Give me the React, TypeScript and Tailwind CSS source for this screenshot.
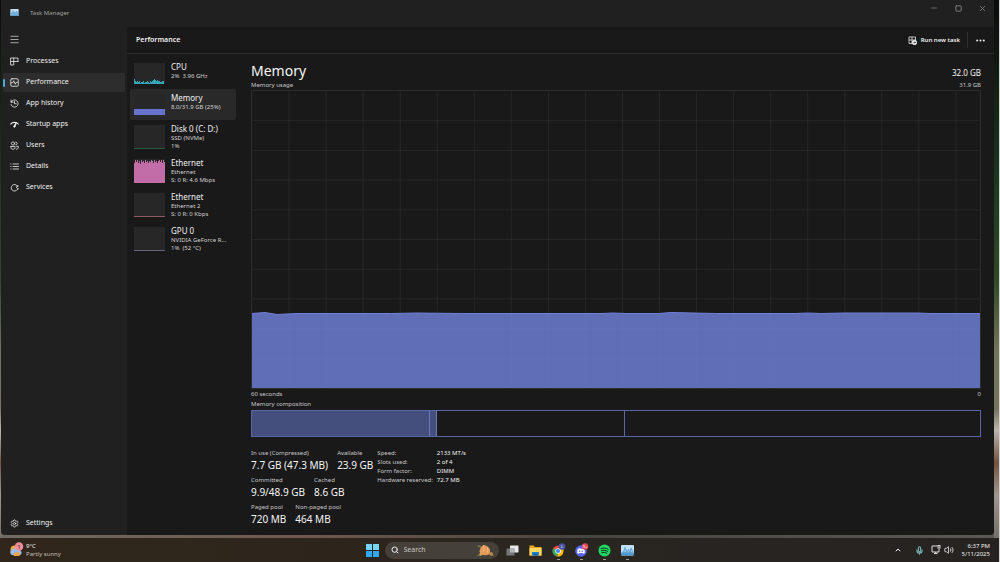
import React from "react";
import { ChevronUp, Menu, Mic, Minus, Search, Settings, Square, Volume2, X } from "lucide-react";

const GRID_COLUMNS = Array.from({ length: 19 }, (_, i) => (i + 1) * 37.15);
const GRID_ROWS = Array.from({ length: 9 }, (_, i) => (i + 1) * 29.9);

const USAGE_LINE =
  "M0 224 L13 223 L25 225 L45 224 L140 224 L165 223.5 L210 224 L350 224 L362 223.5 L375 224 L408 224 L420 223 L465 224 L545 224 L557 223.5 L570 224 L595 223.5 L668 223.5 L680 224 L730 224";

const NavIcon = ({ children }: { children: React.ReactNode }) => (
  <svg
    viewBox="0 0 18 18"
    className="size-[9px] shrink-0"
    fill="none"
    stroke="currentColor"
    strokeWidth="1.6"
    strokeLinecap="round"
    strokeLinejoin="round"
  >
    {children}
  </svg>
);

const navItems = [
  {
    label: "Processes",
    icon: <path d="M2 2h5.500v14H2zM2 9h14M7.500 2H16v7" />,
  },
  {
    label: "Performance",
    active: true,
    icon: (
      <>
        <rect x="1.500" y="1.500" width="15" height="15" rx="2.500" />
        <path d="M3 9.500h2.500l2-4 3 7 2-4h2.500" />
      </>
    ),
  },
  {
    label: "App history",
    icon: (
      <>
        <path d="M2 2v4.500h4.500M2.300 6.300A7.200 7.200 0 1 1 2 11" />
        <path d="M9 5v4.500h3.500" />
      </>
    ),
  },
  {
    label: "Startup apps",
    icon: (
      <>
        <path d="M1.500 8C5 3.500 13 3.500 16.500 8" strokeWidth="2.400" />
        <path d="M12.500 5 7.500 12.500a1.500 1.500 0 0 0 2.800 1.200z" fill="currentColor" />
      </>
    ),
  },
  {
    label: "Users",
    icon: (
      <>
        <circle cx="6" cy="5" r="3.200" />
        <path d="M1.500 11h8.500v2.500c0 4-8.500 4-8.500 0z" />
        <path d="M11.500 2.200a2.800 2.800 0 1 1 0 5.600M13 10.800h3.500v2.500c0 2-1.500 3-4 3" />
      </>
    ),
  },
  {
    label: "Details",
    icon: <path d="M6 4h11M6 9h11M6 14h11M1.500 4h.5M1.500 9h.5M1.500 14h.5" />,
  },
  {
    label: "Services",
    icon: (
      <path d="M14.500 6a6.500 6.500 0 1 0 0 7c1.500.5 2.500-.5 2-2l-2.500-.5a2 2 0 0 1 0-3.500l2.500-.5c0-1.500-1-2-2-.5z" />
    ),
  },
];

const CPU_BARS = [5, 3, 2, 3, 2, 3, 1, 2, 2, 3, 1, 2, 2, 3, 2, 1, 3, 2, 3, 4, 5, 4, 3, 4, 3, 3, 2, 2, 3, 3];
const NET_BARS = [20, 23, 21, 23, 20, 22, 19, 23, 21, 22, 20, 23, 21, 22, 20, 22, 21, 23, 22, 20, 23, 21, 22, 20, 22, 23, 21, 23, 20, 23, 21];

const Bars = ({ data, height }: { data: number[]; height: number }) => (
  <>
    {data.map((value, i) => (
      <rect key={i} x={i} y={height - value} width="1" height={value} />
    ))}
  </>
);

const resources = [
  {
    name: "CPU",
    lines: ["2%  3.96 GHz"],
    chart: (
      <g fill="#35a5b8">
        <Bars data={CPU_BARS} height={21} />
      </g>
    ),
  },
  {
    name: "Memory",
    lines: ["8.0/31.9 GB (25%)"],
    active: true,
    chart: <rect y="15" width="31" height="6" fill="#6673cc" />,
  },
  {
    name: "Disk 0 (C: D:)",
    lines: ["SSD (NVMe)", "1%"],
    chart: <rect y="23" width="31" height="1" fill="#28583c" />,
  },
  {
    name: "Ethernet",
    lines: ["Ethernet", "S: 0 R: 4.6 Mbps"],
    chart: (
      <g fill="#c26da8">
        <Bars data={NET_BARS} height={24} />
      </g>
    ),
  },
  {
    name: "Ethernet",
    lines: ["Ethernet 2", "S: 0 R: 0 Kbps"],
    chart: <rect y="23" width="31" height="1" fill="#8d5a66" />,
  },
  {
    name: "GPU 0",
    lines: ["NVIDIA GeForce R...", "1%  (52 °C)"],
    chart: <rect y="23" width="31" height="1" fill="#66647c" />,
  },
];

const stats = [
  [
    { label: "In use (Compressed)", value: "7.7 GB (47.3 MB)" },
    { label: "Available", value: "23.9 GB" },
  ],
  [
    { label: "Committed", value: "9.9/48.9 GB" },
    { label: "Cached", value: "8.6 GB" },
  ],
  [
    { label: "Paged pool", value: "720 MB" },
    { label: "Non-paged pool", value: "464 MB" },
  ],
];

const hardware = [
  ["Speed:", "2133 MT/s"],
  ["Slots used:", "2 of 4"],
  ["Form factor:", "DIMM"],
  ["Hardware reserved:", "72.7 MB"],
];

const TaskManagerIcon = ({ className }: { className: string }) => (
  <svg viewBox="0 0 26 22" className={className}>
    <rect width="26" height="22" rx="2" fill="#c3def2" />
    <rect y="17" width="26" height="5" rx="1" fill="#5b9fd2" />
    <path d="M2 14h3l3-9 4 9 3-5 3 5 2-8 4 8v2H2z" fill="#77b8e6" stroke="#4c97cf" strokeWidth="1.500" />
  </svg>
);

const TitleBar = () => (
  <header className="flex h-[27px] shrink-0 items-start pl-[9px]">
    <div className="flex h-[27px] flex-1 items-center gap-[11px] text-[6px] text-[#a0a0a0]">
      <TaskManagerIcon className="mb-[2px] h-[7px] w-[9px]" />
      Task Manager
    </div>
    <div className="flex text-[#888888]">
      <button aria-label="Minimize" className="flex h-4 w-6 items-center justify-center">
        <Minus className="size-2" strokeWidth={2} />
      </button>
      <button aria-label="Maximize" className="flex h-4 w-6 items-center justify-center">
        <Square className="size-[7px]" strokeWidth={3} />
      </button>
      <button aria-label="Close" className="flex h-4 w-6 items-center justify-center">
        <X className="size-[9px]" strokeWidth={2} />
      </button>
    </div>
  </header>
);

const Sidebar = () => (
  <nav className="flex w-[126px] shrink-0 flex-col px-[2px] text-[7px] text-[#f0f0f0]">
    <button aria-label="Menu" className="flex h-[25px] items-center pl-[6px] text-[#b0b0b0]">
      <Menu className="size-[11px]" strokeWidth={2} />
    </button>
    <ul className="flex flex-col gap-[2px]">
      {navItems.map((item) => (
        <li key={item.label}>
          <button
            className={`flex h-[19px] w-full items-center rounded-[2px] ${item.active ? "bg-[#2d2d2d]" : ""}`}
          >
            <span className={`h-2 w-[2px] shrink-0 rounded-[1px] ${item.active ? "bg-[#4aa8dc]" : ""}`} />
            <span className="flex items-center gap-[7px] pl-[5px]">
              <NavIcon>{item.icon}</NavIcon>
              {item.label}
            </span>
          </button>
        </li>
      ))}
    </ul>
    <button className="mb-[2px] mt-auto flex h-[19px] items-center gap-[7px] pl-[7px]">
      <Settings className="size-[9px]" strokeWidth={2} />
      Settings
    </button>
  </nav>
);

const ResourceList = () => (
  <ul className="w-[109px] shrink-0 pl-[3px] pt-1">
    {resources.map((item, i) => (
      <li key={i}>
        <button
          className={`flex w-full items-start gap-[6px] rounded-[2px] pl-1 pt-1 text-left ${
            item.lines.length > 1 ? "h-[34px]" : "h-[31px]"
          } ${item.active ? "bg-[#292929]" : ""}`}
        >
          <svg
            viewBox={item.lines.length > 1 ? "0 0 31 24" : "0 0 31 21"}
            shapeRendering="crispEdges"
            className={`mt-px w-[31px] shrink-0 bg-[#272727] ${item.lines.length > 1 ? "h-6" : "h-[21px]"}`}
          >
            {item.chart}
          </svg>
          <span className="flex flex-col whitespace-pre text-[6px] leading-[8px] text-[#d0d0d0]">
            <span className="text-[8px] leading-[10px] text-[#f0f0f0]">{item.name}</span>
            {item.lines.map((line) => (
              <span key={line}>{line}</span>
            ))}
          </span>
        </button>
      </li>
    ))}
  </ul>
);

const UsageGraph = () => (
  <svg
    viewBox="0 0 730 299"
    preserveAspectRatio="none"
    className="min-h-[120px] w-full flex-[1_1_0px] border border-[#2c2c2c] bg-[#191919]"
    role="img"
    aria-label="Memory usage"
  >
    <path d={`${USAGE_LINE} V299 H0 Z`} fill="#5f6eb7" />
    <g stroke="#ffffff" strokeOpacity="0.06">
      {GRID_COLUMNS.map((x) => (
        <path key={x} d={`M${x} 0V224`} vectorEffect="non-scaling-stroke" />
      ))}
      {GRID_ROWS.map((y) => (
        <path key={y} d={`M0 ${y}H730`} strokeOpacity={y > 224 ? 0.02 : 0.06} vectorEffect="non-scaling-stroke" />
      ))}
      {GRID_COLUMNS.map((x) => (
        <path key={x} d={`M${x} 224V299`} strokeOpacity="0.02" vectorEffect="non-scaling-stroke" />
      ))}
    </g>
    <path d={USAGE_LINE} fill="none" stroke="#7180d8" vectorEffect="non-scaling-stroke" />
  </svg>
);

const MemoryPanel = () => (
  <section className="flex min-w-0 flex-1 flex-col pb-2 pl-[15px] pr-[13px] pt-[6px] text-[6px] leading-[9px] text-[#c8c8c8]">
    <div className="flex h-[21px] shrink-0 items-center justify-between text-[#f5f5f5]">
      <h1 className="text-[14px] leading-[21px]">Memory</h1>
      <span className="pt-[3px] text-[8px]">32.0 GB</span>
    </div>
    <div className="flex h-[9px] shrink-0 justify-between">
      <span>Memory usage</span>
      <span>31.9 GB</span>
    </div>
    <UsageGraph />
    <div className="flex h-[10px] shrink-0 items-center justify-between">
      <span>60 seconds</span>
      <span>0</span>
    </div>
    <div className="h-[11px] shrink-0 leading-[10px]">Memory composition</div>
    <div className="flex h-[27px] shrink-0 border border-[#5b66a8]">
      <div className="w-[24.4%] border-r border-[#6d78bc] bg-[#454f7d]" />
      <div className="w-[1%] border-r border-[#6d78bc] bg-[#454f7d]" />
      <div className="w-[25.9%] border-r border-[#5b66a8]" />
    </div>

    <div className="flex shrink-0 gap-1 pt-3">
      <div className="flex flex-col gap-[3px]">
        {stats.map((row) => (
          <dl key={row[0].label} className="flex gap-[9px]">
            {row.map((stat) => (
              <div key={stat.label}>
                <dt>{stat.label}</dt>
                <dd className="text-[10px] leading-[15px] text-[#f5f5f5]">{stat.value}</dd>
              </div>
            ))}
          </dl>
        ))}
      </div>
      <table className="self-start text-left">
        <tbody>
          {hardware.map(([label, value]) => (
            <tr key={label}>
              <th scope="row" className="p-0 pr-1 font-normal">
                {label}
              </th>
              <td className="p-0 text-[#f0f0f0]">{value}</td>
            </tr>
          ))}
        </tbody>
      </table>
    </div>
  </section>
);

const PerformanceHeader = () => (
  <div className="flex h-[27px] shrink-0 items-center border-b border-[#2b2b2b] px-[9px] text-[#f0f0f0]">
    <h2 className="flex-1 text-[7px] font-semibold">Performance</h2>
    <button className="flex items-center gap-1 pr-[7px] text-[6px] font-semibold">
      <svg viewBox="0 0 18 18" className="size-[9px]" fill="none" stroke="currentColor" strokeWidth="1.500">
        <path d="M8 15H2V2h13v6M2 8h13M8 2v13" />
        <circle cx="13" cy="13" r="4.500" fill="#f0f0f0" />
        <path d="M11 13h4M13.500 11.500 15 13l-1.500 1.500" stroke="#191919" />
      </svg>
      Run new task
    </button>
    <span className="h-4 w-px bg-[#303030]" />
    <button aria-label="More options" className="pl-2">
      <svg viewBox="0 0 9 3" className="h-[3px] w-[9px]" fill="currentColor">
        <circle cx="1.200" cy="1.500" r="1" />
        <circle cx="4.500" cy="1.500" r="1" />
        <circle cx="7.800" cy="1.500" r="1" />
      </svg>
    </button>
  </div>
);

const WeatherIcon = () => (
  <svg viewBox="0 0 30 32" className="h-4 w-[15px]">
    <circle cx="11" cy="15" r="8" fill="#f5a936" />
    <path d="M6 26a6 6 0 0 1 0-11 8 8 0 0 1 13 1 5 5 0 0 1 2 10z" fill="#9dbbe8" />
    <path d="M9 28a8 8 0 0 1 8-8 6 6 0 0 1 4 8z" fill="#eda541" />
    <circle cx="20" cy="9" r="8.500" fill="#ee8d98" />
    <text x="20" y="13" fontSize="11" textAnchor="middle" fill="#2b1a1a">
      1
    </text>
  </svg>
);

const taskbarApps = [
  {
    label: "Task View",
    icon: (
      <>
        <rect x="8" y="3" width="17" height="14" rx="1" fill="#e8e8e8" />
        <rect x="1" y="9" width="16" height="14" rx="1" fill="#777777" />
        <path d="M8 9h9v8H8z" fill="#b5b5b5" />
      </>
    ),
  },
  {
    label: "File Explorer",
    icon: (
      <>
        <path d="M1 3h8l3 3h13v17H1z" fill="#e9a821" />
        <path d="M1 8h24v15H1z" fill="#ffd75e" />
        <path d="M6 16h14v7H6z" fill="#2382d2" />
        <path d="M9 19h8v4H9z" fill="#155ea5" />
      </>
    ),
  },
  {
    label: "Chrome",
    running: true,
    icon: (
      <>
        <circle cx="12" cy="14" r="11" fill="#e94335" />
        <path d="M12 14 2.500 8.500A11 11 0 0 0 11 25z" fill="#31a852" />
        <path d="m12 14 1-5h9a11 11 0 0 1-11 16z" fill="#fbbc05" />
        <circle cx="12" cy="14" r="5.500" fill="#ffffff" />
        <circle cx="12" cy="14" r="4.200" fill="#4285f4" />
        <circle cx="20" cy="5" r="6.500" fill="#4655a5" />
        <text x="20" y="8" fontSize="8" textAnchor="middle" fill="#ffffff">
          L
        </text>
      </>
    ),
  },
  {
    label: "Discord",
    running: true,
    icon: (
      <>
        <circle cx="12" cy="14" r="11.500" fill="#5865f2" />
        <path
          d="M6 10c2-1.500 3-1.500 4-1.500l.5 1h3l.5-1c1 0 2 0 4 1.500 1.500 3 2 5 1.500 8-1 1-2.500 1.500-3.500 1.500l-1-1.500h-6l-1 1.500c-1 0-2.500-.5-3.500-1.500C4 15 4.500 13 6 10z"
          fill="#ffffff"
        />
        <circle cx="9.500" cy="14.500" r="1.500" fill="#5865f2" />
        <circle cx="14.500" cy="14.500" r="1.500" fill="#5865f2" />
        <circle cx="20" cy="5" r="6.500" fill="#e04a5a" />
        <text x="20" y="8" fontSize="8" textAnchor="middle" fill="#ffffff">
          9+
        </text>
      </>
    ),
  },
  {
    label: "Spotify",
    running: true,
    icon: (
      <>
        <circle cx="13" cy="13" r="12" fill="#1ed760" />
        <path
          d="M6 9c5-1.500 10-1 14.500 1.500M7 13.300c4-1.200 8.500-.8 12 1.400M7.500 17.300c3.500-1 7-.6 10 1.200"
          fill="none"
          stroke="#16301f"
          strokeWidth="2"
          strokeLinecap="round"
        />
      </>
    ),
  },
  {
    label: "Task Manager",
    running: true,
    icon: (
      <>
        <rect x="0" y="2" width="26" height="21" rx="2" fill="#c3def2" />
        <path d="M0 18h26v3a2 2 0 0 1-2 2H2a2 2 0 0 1-2-2z" fill="#4f98d0" />
        <path d="M2 16h3l3-9 4 9 3-5 3 5 2-8 4 8v1H2z" fill="#8cc6ee" stroke="#4c97cf" strokeWidth="1.500" />
      </>
    ),
  },
];

const Taskbar = () => (
  <footer className="grid h-[24px] shrink-0 grid-cols-[1fr_auto_1fr] items-center bg-[linear-gradient(90deg,#30261b,#2d251c_35%,#292622_60%,#252220)] text-[6px] leading-[8px] text-[#f0f0f0]">
    <button className="flex items-center gap-[2px] pl-[9px] text-left">
      <WeatherIcon />
      <span className="flex flex-col">
        <span>9°C</span>
        <span className="text-[#c4beb6]">Partly sunny</span>
      </span>
    </button>

    <div className="flex items-center">
      <button aria-label="Start">
        <svg viewBox="0 0 13 13" className="size-[13px]">
          <path d="M0 0h6v6H0zM7 0h6v6H7z" fill="#74d4fb" />
          <path d="M0 7h6v6H0zM7 7h6v6H7z" fill="#2eaaf0" />
        </svg>
      </button>
      <label className="ml-[6px] flex h-[17px] w-[114px] items-center gap-[5px] rounded-full bg-[#45403a] pl-[6px] pr-1">
        <Search className="size-2 shrink-0" strokeWidth={3} />
        <input
          type="search"
          aria-label="Search"
          placeholder="Search"
          className="w-0 min-w-0 flex-1 bg-transparent text-[7px] outline-none placeholder:text-[#c9c5c0]"
        />
        <svg viewBox="0 0 40 32" className="h-[15px] w-[19px] shrink-0">
          <path d="M3 7c5-2 7 2 8 5M3 26c6 2 8-1 11-4M27 22c4 3 8 2 10 5M6 17l5 1" fill="none" stroke="#777b46" strokeWidth="3" />
          <path d="M8 20c-1-6 2-13 8-16 6 1 10 3 13 9 2 6 0 11-3 12-8 2-14 1-18-5z" fill="#e69a59" />
          <path d="M16 5c1 6 1 10-1 15M24 9c1 4 1 8 0 12" fill="none" stroke="#efb67c" strokeWidth="2" />
          <circle cx="32" cy="23" r="4" fill="#b88945" />
          <circle cx="10" cy="24" r="3" fill="#d3a25b" />
        </svg>
      </label>
      <div className="ml-[7px] flex gap-[10px]">
        {taskbarApps.map((app) => (
          <button key={app.label} aria-label={app.label} className="relative">
            <svg viewBox="0 0 26 26" className="size-[13px] overflow-visible">
              {app.icon}
            </svg>
            {app.running && (
              <span className="absolute -bottom-[3px] left-[5px] h-px w-[3px] rounded bg-[#a5a19c]" />
            )}
          </button>
        ))}
      </div>
    </div>

    <div className="flex items-center justify-end pr-[9px]">
      <button aria-label="Show hidden icons" className="mr-[13px]">
        <ChevronUp className="size-2" strokeWidth={3} />
      </button>
      <button aria-label="Microphone" className="mr-[7px] text-[#76b5b5]">
        <Mic className="size-[9px]" strokeWidth={3} />
      </button>
      <button className="mr-2 flex gap-[3px]" aria-label="Network and volume">
        <svg viewBox="0 0 20 18" className="h-[9px] w-[10px]" fill="none" stroke="currentColor" strokeWidth="1.800">
          <path d="M13 2H2v12h14V8M6 17h7M9.500 14v3" />
          <rect x="14" y="1" width="4" height="5" />
        </svg>
        <Volume2 className="size-[10px]" strokeWidth={2} />
      </button>
      <button className="flex flex-col items-end">
        <span>6:37 PM</span>
        <span>5/11/2025</span>
      </button>
    </div>
  </footer>
);

export default function App() {
  return (
    <div className="flex min-h-screen flex-col border-r border-[#d0d0d0] bg-[#252220] font-['Noto_Sans','Open_Sans',sans-serif]">
      {/* Desktop wallpaper shows around the edges of the window */}
      <div className="flex flex-1 bg-[linear-gradient(180deg,#0a0c0c,#10180f_10%,#1c3a20_35%,#304a26_52%,#72745a_65%,#77735e_76%,#bcb4ae_80%,#72533e_86%,#a0968d_92%,#75706a)] pl-px pr-[5px]">
        <div className="flex min-w-0 flex-1 flex-col bg-[linear-gradient(90deg,#6f6b64,#70584c_30%,#484541_60%,#5c5854)] pb-[3px]">
          <div className="flex flex-1 flex-col overflow-hidden rounded-b-[4px] bg-[#202020]">
            <TitleBar />
            <div className="flex flex-1">
              <Sidebar />
              <main className="flex min-w-0 flex-1 flex-col rounded-tl-[4px] bg-[#191919]">
                <PerformanceHeader />
                <div className="flex flex-1">
                  <ResourceList />
                  <MemoryPanel />
                </div>
              </main>
            </div>
          </div>
        </div>
      </div>
      <Taskbar />
    </div>
  );
}
